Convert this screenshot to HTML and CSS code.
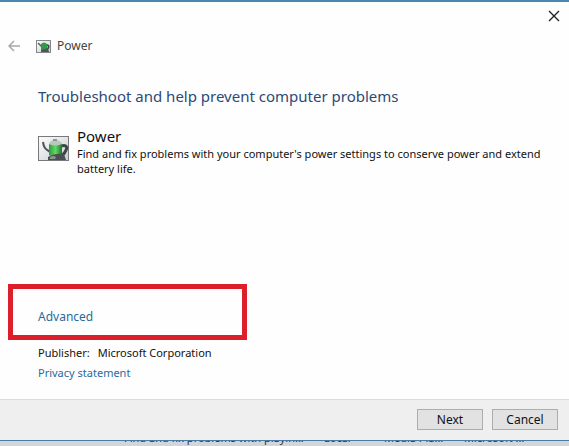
FILE: index.html
```
<!DOCTYPE html>
<html lang="en">
<head>
  <meta charset="UTF-8" />
  <meta name="viewport" content="width=device-width, initial-scale=1.0" />
  <title>Power</title>
  <link rel="stylesheet" href="styles.css">
</head>
<body>
  <svg width="0" height="0" class="defs" aria-hidden="true">
    <defs>
      <linearGradient id="frame" x1="0" y1="0" x2="1" y2="1">
        <stop offset="0" stop-color="#fdfdfd" />
        <stop offset="1" stop-color="#c9cbcd" />
      </linearGradient>
      <linearGradient id="green" x1="0" y1="0" x2="1" y2="0">
        <stop offset="0" stop-color="#2f9a42" />
        <stop offset="0.5" stop-color="#62d864" />
        <stop offset="1" stop-color="#1f7432" />
      </linearGradient>
      <symbol id="power" viewBox="0 0 31 27">
        <rect x="0.5" y="1.5" width="30" height="24" fill="url(#frame)" stroke="#77797c" />
        <path d="M5 7 C6 14 8 14 12 17" fill="none" stroke="#4b5358" stroke-width="2" />
        <path d="M23 11 C29 9 30 13 27 17 C26 20 24 20 22 20" fill="none" stroke="#3e454a" stroke-width="3" />
        <path d="M11 9 Q17 6 24 9 L24 20 Q17 24 11 20 Z" fill="url(#green)" />
        <path d="M11 9 Q12 5 17 5 Q23 5 24 9 Q17 12 11 9 Z" fill="#b9c7bd" />
        <rect x="15" y="4" width="4" height="2" fill="#8d9890" />
        <path d="M10 22 Q17 18 26 19 L28 25 L10 25 Z" fill="#4a4f52" />
        <path d="M12 22 Q15 20 18 22 L17 24 L12 24 Z" fill="#8c9592" />
      </symbol>
      <symbol id="power-small" viewBox="0 0 15 13">
        <rect x="0.5" y="0.5" width="14" height="12" fill="url(#frame)" stroke="#85888a" />
        <path d="M2 3 L6 7" stroke="#4f6256" stroke-width="1.4" />
        <path d="M5 4 Q8 1 11 4 L12 10 L5 10 Z" fill="#2f9a4c" />
        <path d="M11 5 Q14 5 12 9" fill="none" stroke="#3e454a" stroke-width="1.5" />
        <path d="M5 10 L12 8 L13 12 H5 Z" fill="#50575a" />
      </symbol>
    </defs>
  </svg>

  <div class="dialog">
    <div class="titlebar">
      <button class="icon-btn close" aria-label="Close">
        <svg width="12" height="12" viewBox="0 0 12 12"><path d="M1 1 L11 11 M11 1 L1 11" stroke="#222" stroke-width="1.4" /></svg>
      </button>
    </div>
    <header>
      <button class="icon-btn" aria-label="Back" disabled>
        <svg width="13" height="12" viewBox="0 0 13 12"><path d="M6 1 L1 6 L6 11 M1 6 H12" fill="none" stroke="#a8a8a8" stroke-width="1.5" /></svg>
      </button>
      <svg class="small-icon" width="15" height="13"><use href="#power-small" /></svg>
      <span>Power</span>
    </header>

    <main>
      <h1>Troubleshoot and help prevent computer problems</h1>
      <div class="item">
        <svg width="31" height="27"><use href="#power" /></svg>
        <div>
          <h2>Power</h2>
          <p>Find and fix problems with your computer's power settings to conserve power and extend battery life.</p>
        </div>
      </div>
    </main>

    <div class="highlight">
      <a href="#advanced">Advanced</a>
    </div>
    <div class="info">
      <p class="publisher"><span>Publisher:</span><span>Microsoft Corporation</span></p>
      <a href="#privacy">Privacy statement</a>
    </div>

    <footer>
      <button class="btn">Next</button>
      <button class="btn">Cancel</button>
    </footer>
  </div>

  <div class="behind">
    <span>Find and fix problems with playin...</span>
    <span>Local</span>
    <span>Media Pla...</span>
    <span>Microsoft ...</span>
  </div>
</body>
</html>
```

FILE: styles.css
```
* {
  box-sizing: border-box;
}
body {
  margin: 0;
  min-height: 100vh;
  display: flex;
  flex-direction: column;
  font-family: "Noto Sans", "Open Sans", sans-serif;
  font-size: 12px;
  line-height: 16px;
  color: #111;
  background: #fefefe;
}
h1, h2, p {
  margin: 0;
  font-weight: 400;
}
a {
  color: #2a6a9c;
  text-decoration: none;
}
.defs {
  position: absolute;
}
.dialog {
  flex: 1;
  display: flex;
  flex-direction: column;
  border-top: 2px solid #4a86b0;
  border-bottom: 1px solid #4a7ba3;
}
.titlebar {
  display: flex;
  justify-content: flex-end;
  padding: 8px 9px 0;
}
.icon-btn {
  display: flex;
  padding: 0;
  border: none;
  background: none;
}
header {
  display: flex;
  align-items: center;
  padding: 16px 8px 0;
  color: #444;
}
.small-icon {
  margin: 0 6px 0 15px;
}
main {
  flex: 1;
  padding: 32px 16px 0 38px;
}
h1 {
  font-size: 15px;
  line-height: 20px;
  color: #2b4a78;
}
.item {
  display: flex;
  gap: 8px;
  margin-top: 20px;
}
.item > svg {
  flex: none;
  margin-top: 9px;
}
h2 {
  font-size: 15px;
  line-height: 20px;
}
.item p {
  font-size: 11px;
  line-height: 15px;
}
.highlight {
  width: 42%;
  margin-left: 8px;
  padding: 20px 25px 10px;
  border: 5px solid #dc1f2a;
}
.info {
  padding: 3px 38px 16px;
  font-size: 11px;
  line-height: 20px;
}
.publisher {
  display: flex;
  gap: 8px;
}
footer {
  display: flex;
  justify-content: flex-end;
  gap: 9px;
  padding: 9px 11px 10px;
  background: #efefef;
  border-top: 1px solid #dcdcdc;
}
.btn {
  width: 66px;
  height: 21px;
  padding: 0;
  font: inherit;
  color: #111;
  background: #e2e2e2;
  border: 1px solid #adadad;
}
.behind {
  height: 5px;
  display: grid;
  grid-template-columns: 200px 60px 80px 1fr;
  align-content: end;
  padding-left: 124px;
  overflow: hidden;
  font-size: 11px;
  color: #333;
  background: #cfd6dc;
}
```
